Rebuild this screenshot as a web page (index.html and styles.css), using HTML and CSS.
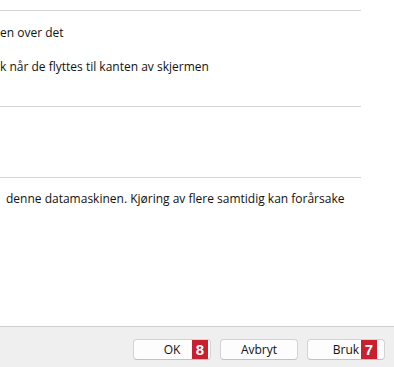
FILE: index.html
```html
<!DOCTYPE html>
<html lang="nb">
  <head>
    <meta charset="UTF-8" />
    <meta name="viewport" content="width=device-width, initial-scale=1.0" />
    <title>Innstillinger</title>
    <link rel="stylesheet" href="styles.css">
  </head>
  <body>
    <div class="dialog">
      <div class="content">
        <div class="group options">
          <p class="option">en over det</p>
          <p class="option">k når de flyttes til kanten av skjermen</p>
        </div>
        <div class="group empty"></div>
        <div class="group note">
          <p class="option">denne datamaskinen. Kjøring av flere samtidig kan forårsake</p>
        </div>
      </div>

      <div class="footer">
        <button class="btn">OK<span class="badge badge-ok">8</span></button>
        <button class="btn">Avbryt</button>
        <button class="btn">Bruk<span class="badge badge-apply">7</span></button>
      </div>
    </div>
  </body>
</html>
```

FILE: styles.css
```css
html,
body {
  margin: 0;
  height: 100%;
}
body {
  font-family: "Open Sans", "Noto Sans", sans-serif;
  font-size: 12px;
  color: #111111;
  background: #ffffff;
}
.dialog {
  display: flex;
  flex-direction: column;
  height: 367px;
}
.content {
  flex: 1;
  padding: 10px 33px 0 0;
}
.group {
  border-top: 1px solid #d4d4d4;
}
.option {
  margin: 0;
  line-height: 16px;
  white-space: nowrap;
}
.options {
  padding: 14px 0 31px;
}
.options .option + .option {
  margin-top: 18px;
}
.empty {
  height: 70px;
}
.note {
  padding: 13px 0 0 6px;
}
.footer {
  display: flex;
  justify-content: flex-end;
  gap: 9px;
  height: 41px;
  box-sizing: border-box;
  padding: 12px 9px 0 0;
  background: #efefef;
  border-top: 1px solid #cfcfcf;
}
.btn {
  position: relative;
  width: 78px;
  height: 21px;
  padding: 0;
  font-family: inherit;
  font-size: 12px;
  color: #111111;
  background: #fdfdfd;
  border: 1px solid #d3d3d3;
  border-bottom-color: #c2c2c2;
  border-radius: 4px;
}
.badge {
  position: absolute;
  top: 0;
  height: 19px;
  line-height: 19px;
  width: 16px;
  text-align: center;
  background: #c8202f;
  color: #ffffff;
  font-family: "Liberation Sans", Arial, sans-serif;
  font-weight: bold;
  font-size: 15px;
}
.badge-ok {
  right: 2px;
}
.badge-apply {
  right: 7px;
}
```
